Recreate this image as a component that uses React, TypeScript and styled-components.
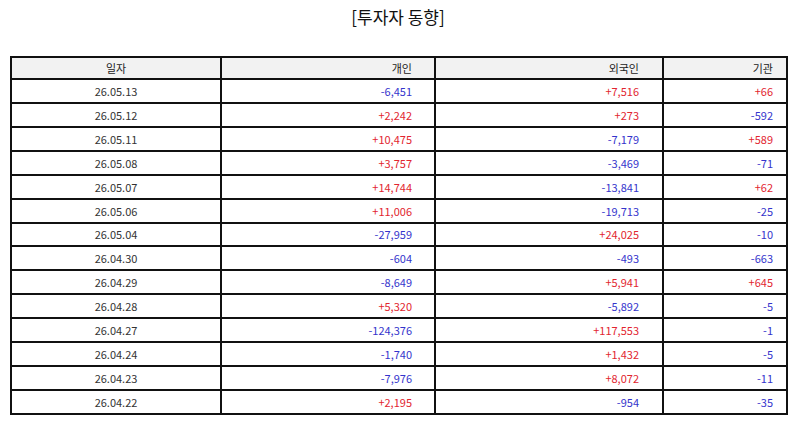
import React, { FC } from 'react';
import styled, { createGlobalStyle } from 'styled-components';

const GlobalStyle = createGlobalStyle`
  html, body {
    margin: 0;
    padding: 0;
    background: #ffffff;
  }
  body {
    font-family: 'Noto Sans CJK KR', 'Noto Sans', sans-serif;
    color: #222;
  }
`;

const Page = styled.div`
  width: 795px;
  height: 425px;
  box-sizing: border-box;
  padding: 0 9px 0 10px;
  display: flex;
  flex-direction: column;
`;

const Title = styled.h3`
  margin: 0;
  height: 56px;
  padding-top: 5px;
  box-sizing: border-box;
  text-align: center;
  font-size: 17px;
  font-weight: 400;
  line-height: 24px;
  color: #111;
`;

const Table = styled.table`
  width: 100%;
  height: 359px;
  border-collapse: collapse;
  table-layout: fixed;
  font-size: 11px;
`;

const Cell = styled.td<{ $align: 'center' | 'right'; $pad: number; $tone?: 'up' | 'down' }>`
  padding: 0 ${(p) => p.$pad}px 0 0;
  border: 2px solid #111;
  text-align: ${(p) => p.$align};
  color: ${(p) => (p.$tone === 'up' ? '#e2252f' : p.$tone === 'down' ? '#3434cc' : '#333')};
  line-height: 20px;
  white-space: nowrap;
`;

const HeadCell = styled(Cell).attrs({ as: 'th' })`
  background: #f2f2f2;
  font-weight: 400;
  color: #222;
`;

type Row = [string, string, string, string];

const rows: Row[] = [
  ['26.05.13', '-6,451', '+7,516', '+66'],
  ['26.05.12', '+2,242', '+273', '-592'],
  ['26.05.11', '+10,475', '-7,179', '+589'],
  ['26.05.08', '+3,757', '-3,469', '-71'],
  ['26.05.07', '+14,744', '-13,841', '+62'],
  ['26.05.06', '+11,006', '-19,713', '-25'],
  ['26.05.04', '-27,959', '+24,025', '-10'],
  ['26.04.30', '-604', '-493', '-663'],
  ['26.04.29', '-8,649', '+5,941', '+645'],
  ['26.04.28', '+5,320', '-5,892', '-5'],
  ['26.04.27', '-124,376', '+117,553', '-1'],
  ['26.04.24', '-1,740', '+1,432', '-5'],
  ['26.04.23', '-7,976', '+8,072', '-11'],
  ['26.04.22', '+2,195', '-954', '-35'],
];

const columns = [
  { label: '일자', width: 210, align: 'center' as const, pad: 0 },
  { label: '개인', width: 214, align: 'right' as const, pad: 22 },
  { label: '외국인', width: 228, align: 'right' as const, pad: 23 },
  { label: '기관', width: 124, align: 'right' as const, pad: 13 },
];

const toneOf = (v: string) => (v.startsWith('+') ? 'up' : v.startsWith('-') ? 'down' : undefined);

const InvestorTable: FC = () => (
  <Table>
    <colgroup>
      {columns.map((c) => (
        <col key={c.label} style={{ width: c.width }} />
      ))}
    </colgroup>
    <thead>
      <tr>
        {columns.map((c) => (
          <HeadCell key={c.label} $align={c.align} $pad={c.pad}>
            {c.label}
          </HeadCell>
        ))}
      </tr>
    </thead>
    <tbody>
      {rows.map((r) => (
        <tr key={r[0]}>
          {r.map((v, i) => (
            <Cell
              key={i}
              $align={columns[i].align}
              $pad={columns[i].pad}
              $tone={i === 0 ? undefined : toneOf(v)}
            >
              {v}
            </Cell>
          ))}
        </tr>
      ))}
    </tbody>
  </Table>
);

export default function App() {
  return (
    <>
      <GlobalStyle />
      <Page>
        <Title>[투자자 동향]</Title>
        <InvestorTable />
      </Page>
    </>
  );
}
